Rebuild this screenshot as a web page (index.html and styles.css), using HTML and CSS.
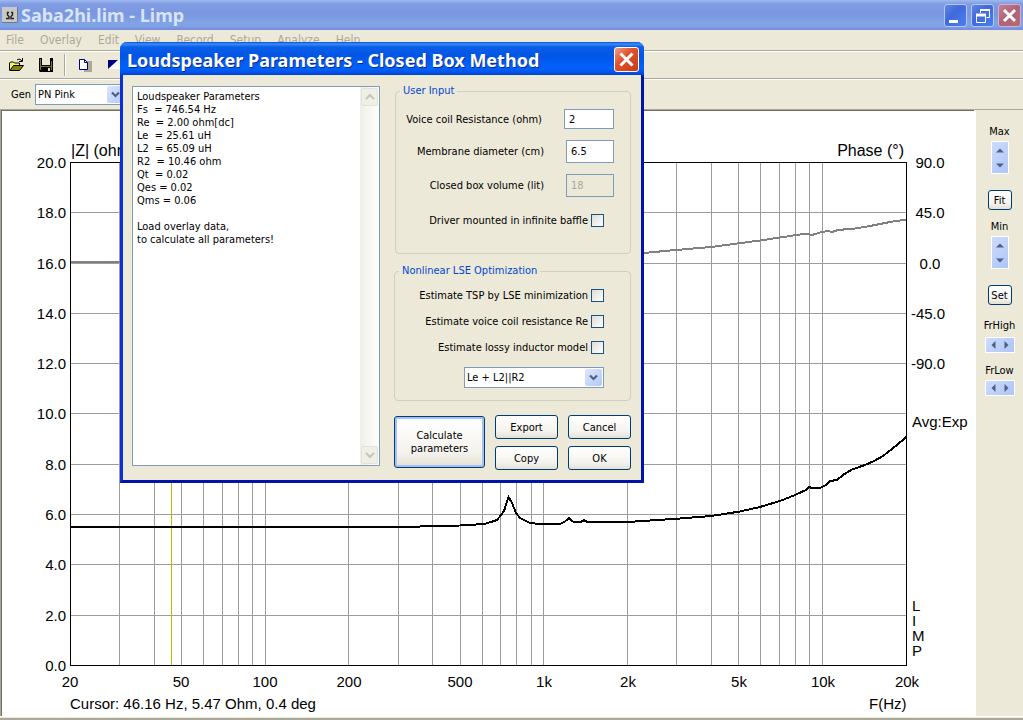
FILE: index.html
```html
<!DOCTYPE html>
<html lang="en">
<head>
<meta charset="utf-8">
<title>Saba2hi.lim - Limp</title>
<link rel="stylesheet" href="styles.css">
</head>
<body>
<div class="app">
  <header class="titlebar">
    <svg class="app-icon" width="16" height="16" viewBox="0 0 16 16"><path d="M0 0h16v16H0z" fill="#c8c8c4"/><path d="M0 15.500h15.500V0" fill="none" stroke="#707888"/><path d="M4 11.500h3V9.500L5.500 8V5.500h1.500M12 11.500H9V9.500L10.500 8V5.500H9" fill="none" stroke="#222" stroke-width="1.400"/></svg>
    <h1 class="app-title">Saba2hi.lim - Limp</h1>
    <div class="win-buttons">
      <button class="win-btn" aria-label="Minimize"><svg width="21" height="21" viewBox="0 0 21 21"><path d="M4 15h9v3H4z" fill="#fff"/></svg></button>
      <button class="win-btn" aria-label="Restore"><svg width="21" height="21" viewBox="0 0 21 21"><path d="M8.500 8V4.500h9v8h-3" fill="none" stroke="#fff"/><path d="M8 5h10" stroke="#fff" stroke-width="2"/><path d="M4.500 10v7.500h9V10" fill="none" stroke="#fff"/><path d="M4 10h10" stroke="#fff" stroke-width="3"/></svg></button>
      <button class="win-btn win-close-dim" aria-label="Close"><svg width="21" height="21" viewBox="0 0 21 21"><path d="M5 5l11 11M16 5L5 16" stroke="#fff" stroke-width="3"/></svg></button>
    </div>
  </header>
  <nav class="menubar">
    <button>File</button><button>Overlay</button><button>Edit</button><button>View</button><button>Record</button><button>Setup</button><button>Analyze</button><button>Help</button>
  </nav>
  <div class="toolbar">
    <button class="tool" aria-label="Open"><svg width="16" height="16" viewBox="0 0 16 16"><path d="M9 3q2-2 4 0l1 1M14.500 1v3.500H11" fill="none" stroke="#000"/><path d="M1.500 13.500V6l1-1h3l1 1h5v3" fill="#f4f860" stroke="#000"/><path d="M2 13.500L5.500 8.500H15.500l-4 5z" fill="#84840c" stroke="#000"/></svg></button>
    <button class="tool" aria-label="Save"><svg width="16" height="16" viewBox="0 0 16 16"><path d="M1 1h14v14H2l-1-1z" fill="#000"/><path d="M4 1h8v7H4z" fill="#ece9d8"/><path d="M2 2h1v11H2zM13 4h1v9h-1zM3 9h10v1H3z" fill="#808010"/><path d="M10 11h2v3h-2z" fill="#ddd"/></svg></button>
    <span class="tool-sep"></span>
    <button class="tool" aria-label="Copy"><svg width="16" height="16" viewBox="0 0 16 16"><path d="M7 4h8v11H7z" fill="#aaa79b"/><path d="M2.500 2.500h5l3 3v7h-8z" fill="#fff" stroke="#000080"/><path d="M7.500 2.500v3h3" fill="none" stroke="#000080"/></svg></button>
    <button class="tool" aria-label="Invert colors"><svg width="16" height="16" viewBox="0 0 16 16"><path d="M1 3h14v9H1z" fill="#fff"/><path d="M1 3h10L1 12z" fill="#000080"/></svg></button>
  </div>
  <div class="genbar">
    <label for="gen">Gen</label>
    <span class="combo combo-gen"><select id="gen"><option>PN Pink</option></select><svg class="combo-arrow" viewBox="0 0 17 17"><path d="M5 6.500l3.500 3.500L12 6.500" fill="none" stroke="#4d6185" stroke-width="2.200"/></svg></span>
  </div>
  <main class="workspace">
    <svg class="chart" viewBox="2 111 972 605" role="img" aria-label="Impedance and phase against frequency">
      <path class="grid" d="M119.500 162v503M154.500 162v503M181.500 162v503M203.500 162v503M222.500 162v503M238.500 162v503M252.500 162v503M265.500 162v503M348.500 162v503M398.500 162v503M432.500 162v503M460.500 162v503M482.500 162v503M500.500 162v503M516.500 162v503M531.500 162v503M543.500 162v503M627.500 162v503M676.500 162v503M711.500 162v503M738.500 162v503M760.500 162v503M779.500 162v503M795.500 162v503M809.500 162v503M822.500 162v503M70 212.500h837M70 263.500h837M70 313.500h837M70 363.500h837M70 413.500h837M70 464.500h837M70 514.500h837M70 564.500h837M70 615.500h837"/>
      <path class="cursor-line" d="M171.500 162v503"/>
      <path class="phase" d="M70 262H400L520 260L644 253L670 250.500L711 247L760 240.500L800 234.500L808 234L812 235L822 232L828 231L832 232L838 230L855 228.500L870 226L890 222L907 219.500"/>
      <path class="impedance" d="M70 527H400L460 525.500L484 524L491 522L497 520L501 515L504 511L508.500 497L512 503L516 513L520 518L526 521L530 523L540 524H560L565 521.500L569 518L573 521.500L581 522L584 520L587 522H627L650 520.500L680 518.500L711 516L740 511.500L760 507L780 501L795 495L806 490L809 487L812 488H820L826 485L830 481L837 480L843 475L852 469.500L865 465L875 460.500L883 456L895 446.500L907 436.500"/>
      <path class="frame" d="M70.500 162.500H906.500V665.500H70.500z"/>
      <g class="axis-title"><text x="71" y="156">|Z| (ohm)</text><text x="904" y="156" text-anchor="end">Phase (°)</text></g>
      <g class="ticks" text-anchor="end">
        <text x="66" y="168">20.0</text><text x="66" y="218">18.0</text><text x="66" y="269">16.0</text><text x="66" y="319">14.0</text><text x="66" y="369">12.0</text><text x="66" y="419">10.0</text><text x="66" y="470">8.0</text><text x="66" y="520">6.0</text><text x="66" y="570">4.0</text><text x="66" y="621">2.0</text><text x="66" y="671">0.0</text>
      </g>
      <g class="ticks" text-anchor="middle">
        <text x="930" y="168">90.0</text><text x="930" y="218">45.0</text><text x="930" y="269">0.0</text><text x="928" y="319">-45.0</text><text x="928" y="369">-90.0</text>
        <text x="70" y="687">20</text><text x="181" y="687">50</text><text x="265" y="687">100</text><text x="349" y="687">200</text><text x="460" y="687">500</text><text x="544" y="687">1k</text><text x="628" y="687">2k</text><text x="739" y="687">5k</text><text x="823" y="687">10k</text><text x="907" y="687">20k</text>
      </g>
      <g class="ticks"><text x="70" y="709">Cursor: 46.16 Hz, 5.47 Ohm, 0.4 deg</text><text x="869" y="709">F(Hz)</text><text x="912" y="427">Avg:Exp</text>
        <text x="912" y="611">L</text><text x="912" y="626">I</text><text x="912" y="641">M</text><text x="912" y="656">P</text></g>
    </svg>
    <aside class="side">
      <span>Max</span>
      <button class="spin spin-v" aria-label="Max up or down"><svg width="16" height="31" viewBox="0 0 16 31"><path d="M4 10.500h8l-4-4zM4 21.500h8l-4 4z"/></svg></button>
      <button class="btn small fit">Fit</button>
      <span>Min</span>
      <button class="spin spin-v" aria-label="Min up or down"><svg width="16" height="31" viewBox="0 0 16 31"><path d="M4 10.500h8l-4-4zM4 21.500h8l-4 4z"/></svg></button>
      <button class="btn small set">Set</button>
      <span>FrHigh</span>
      <button class="spin spin-h" aria-label="High frequency"><svg width="28" height="14" viewBox="0 0 28 14"><path d="M9.500 3v8l-4-4zM18.500 3v8l4-4z"/></svg></button>
      <span>FrLow</span>
      <button class="spin spin-h spin-low" aria-label="Low frequency"><svg width="28" height="14" viewBox="0 0 28 14"><path d="M9.500 3v8l-4-4zM18.500 3v8l4-4z"/></svg></button>
    </aside>
  </main>
  <footer class="bottom-edge"></footer>
</div>

<section class="dialog" role="dialog" aria-labelledby="dlg-title">
  <header class="dlg-title">
    <h2 id="dlg-title">Loudspeaker Parameters - Closed Box Method</h2>
    <button class="dlg-close" aria-label="Close"><svg width="23" height="23" viewBox="0 0 23 23"><path d="M5.500 5.500l12 12M17.500 5.500l-12 12" stroke="#fff" stroke-width="3"/></svg></button>
  </header>
  <div class="dlg-body">
    <div class="report">
      <textarea aria-label="Results" readonly>Loudspeaker Parameters
Fs  = 746.54 Hz
Re  = 2.00 ohm[dc]
Le  = 25.61 uH
L2  = 65.09 uH
R2  = 10.46 ohm
Qt  = 0.02
Qes = 0.02
Qms = 0.06

Load overlay data,
to calculate all parameters!</textarea>
      <div class="scrollbar">
        <button aria-label="Scroll up"><svg width="16" height="16" viewBox="0 0 16 16"><path d="M4 10l4-4 4 4" fill="none" stroke="#c6c5bc" stroke-width="2.200"/></svg></button>
        <button aria-label="Scroll down"><svg width="16" height="16" viewBox="0 0 16 16"><path d="M4 6l4 4 4-4" fill="none" stroke="#c6c5bc" stroke-width="2.200"/></svg></button>
      </div>
    </div>
    <form class="controls">
      <fieldset class="user-input">
        <legend>User Input</legend>
        <div class="row"><label for="rv">Voice coil Resistance (ohm)</label><input class="field wide" id="rv" type="text" value="2"></div>
        <div class="row"><label for="dm">Membrane diameter (cm)</label><input class="field" id="dm" type="text" value="6.5"></div>
        <div class="row"><label for="vol">Closed box volume (lit)</label><input class="field" id="vol" type="text" value="18" disabled></div>
        <div class="row check-row last"><label for="baf">Driver mounted in infinite baffle</label><input id="baf" type="checkbox"></div>
      </fieldset>
      <fieldset class="lse">
        <legend>Nonlinear LSE Optimization</legend>
        <div class="row check-row"><label for="tsp">Estimate TSP by LSE minimization</label><input id="tsp" type="checkbox"></div>
        <div class="row check-row"><label for="re">Estimate voice coil resistance Re</label><input id="re" type="checkbox"></div>
        <div class="row check-row"><label for="ind">Estimate lossy inductor model</label><input id="ind" type="checkbox"></div>
        <div class="row"><span class="combo combo-model"><select aria-label="Inductor model"><option>Le + L2||R2</option></select><svg class="combo-arrow" viewBox="0 0 17 17"><path d="M5 6.500l3.500 3.500L12 6.500" fill="none" stroke="#4d6185" stroke-width="2.200"/></svg></span></div>
      </fieldset>
      <div class="actions">
        <button type="button" class="btn primary">Calculate<br>parameters</button>
        <button type="button" class="btn">Export</button>
        <button type="button" class="btn">Cancel</button>
        <button type="button" class="btn">Copy</button>
        <button type="button" class="btn">OK</button>
      </div>
    </form>
  </div>
</section>
</body>
</html>
```
FILE: styles.css
```css
* { box-sizing: border-box; }
html, body { height: 100%; }
body {
  margin: 0;
  background: #ece9d8;
  color: #000;
  font: 11px/13px "DejaVu Sans Condensed", "DejaVu Sans", sans-serif;
}
button, input, select, textarea { font: inherit; color: inherit; margin: 0; }
button { padding: 0; border: 0; background: none; }
svg { display: block; }
h1, h2 { margin: 0; font: bold 18px/24px "Noto Sans", sans-serif; white-space: nowrap; }

.app { display: flex; flex-direction: column; min-height: 100vh; }

.titlebar {
  display: flex;
  align-items: center;
  height: 30px;
  padding: 0 2px;
  background: linear-gradient(#9db9f0 0, #7f9ce3 4px, #7a96df 14px, #82a5e6 24px, #7e9ee4 27px, #7489dc 30px);
}
.app-icon { margin-right: 3px; }
.app-title { flex: 1; color: #d8e4f8; }
.win-buttons { display: flex; gap: 4px; }
.win-btn {
  width: 23px;
  height: 23px;
  border: 1px solid #b4c8f4;
  border-radius: 3px;
  background: linear-gradient(135deg, #5f88e8, #4069dc 40%, #4c80ee);
}
.win-close-dim { background: linear-gradient(135deg, #bf7f92, #b0627a 50%, #b86a72); border-color: #d0b0cc; }

.menubar {
  display: flex;
  align-items: center;
  gap: 16px;
  height: 21px;
  padding: 0 6px;
  border-bottom: 1px solid #aca899;
  font-size: 12px;
}
.menubar button { color: #aca899; }

.toolbar {
  display: flex;
  align-items: center;
  height: 28px;
  padding: 0 8px;
  border-top: 1px solid #fff;
  border-bottom: 1px solid #aca899;
}
.tool { margin-right: 14px; }
.tool-sep { width: 2px; height: 22px; margin: 0 11px 0 -4px; border-left: 1px solid #aca899; border-right: 1px solid #fff; }

.genbar {
  display: flex;
  align-items: center;
  gap: 4px;
  height: 31px;
  padding-left: 11px;
  border-top: 1px solid #fff;
  border-bottom: 1px solid #aca899;
}

.combo { display: flex; align-items: center; background: #fff; border: 1px solid #7f9db9; padding-right: 1px; }
.combo select { flex: 1; min-width: 0; height: 19px; padding: 0 2px; border: 0; background: #fff; appearance: none; }
.combo-arrow { width: 17px; height: 17px; border-radius: 2px; background: linear-gradient(135deg, #dbe5fd, #b4c8f7); }
.combo-gen { width: 91px; }
.combo-model { width: 140px; }

.workspace { display: flex; flex: 1; align-items: stretch; border-left: 1px solid #aca899; min-height: 0; }
.chart {
  flex: 1;
  min-width: 0;
  background: #fff;
  border-left: 1px solid #716f64;
  border-top: 1px solid #716f64;
}
.chart path { shape-rendering: crispEdges; }
.grid { stroke: #9c9c9c; fill: none; }
.cursor-line { stroke: #bcbc00; }
.phase { stroke: #808080; stroke-width: 2; fill: none; }
.impedance { stroke: #000; stroke-width: 2; fill: none; }
.frame { stroke: #000; fill: none; }
.axis-title { font: 16px "Liberation Sans", Arial, sans-serif; }
.ticks { font: 15px "Liberation Sans", Arial, sans-serif; }

.side {
  display: flex;
  flex-direction: column;
  align-items: center;
  width: 49px;
  padding-top: 15px;
  border-left: 2px solid #fff;
}
.spin { border: 1px solid #fff; background: linear-gradient(135deg, #cddbfd, #afc5f8); }
.spin svg { fill: #4d6185; }
.spin-v { margin: 3px 0 16px; }
.spin-h { margin: 5px 0 11px; }
.spin-low { margin-top: 3px; }

.bottom-edge { height: 4px; border-top: 1px solid #fff; border-bottom: 2px solid #aca899; }

.btn {
  min-height: 24px;
  border: 1px solid #003c74;
  border-radius: 3px;
  background: linear-gradient(#fff, #f4f3ee 70%, #e4e0d4);
}
.small { width: 24px; min-height: 20px; }
.fit { margin-bottom: 10px; }
.set { margin-bottom: 14px; }

.dialog {
  position: absolute;
  left: 120px;
  top: 42px;
  width: 524px;
  border: solid #0831d9;
  border-width: 0 3px 3px;
  border-right-color: #0014a8;
  border-bottom-color: #0014a8;
  border-radius: 7px 7px 0 0;
  background: #ece9d8;
}
.dlg-title {
  display: flex;
  align-items: center;
  justify-content: space-between;
  height: 33px;
  margin: 0 -3px;
  padding: 2px 5px 0 7px;
  border-radius: 7px 7px 0 0;
  background: linear-gradient(#0a4fd8 0, #3b8cff 2px, #0a5ee8 5px, #0055e5 14px, #0262fb 26px, #0355ec 30px, #0040c8 33px);
}
.dlg-title h2 { color: #fff; text-shadow: 1px 1px 0 #0a2a90; }
.dlg-close {
  width: 25px;
  height: 25px;
  border: 1px solid #fff;
  border-radius: 3px;
  background: linear-gradient(135deg, #f0a088, #e0532c 40%, #c83a14);
}
.dlg-body { display: flex; align-items: stretch; gap: 14px; padding: 11px 10px 10px 9px; }

.report { display: flex; flex: 1; height: 380px; border: 1px solid #7f9db9; background: #fff; }
.report textarea { flex: 1; min-width: 0; padding: 3px 4px; border: 0; resize: none; background: #fff; overflow: hidden; outline: 0; }
.scrollbar { display: flex; flex-direction: column; justify-content: space-between; width: 19px; padding: 1px; background: linear-gradient(90deg, #f0f0ea, #fefefb); }
.scrollbar button { border: 1px solid #e4e2d6; border-radius: 2px; background: #f0efe6; width: 17px; height: 18px; }

.controls { width: 237px; margin-top: -2px; }
fieldset { margin: 0; padding: 11px 26px 0 0; border: 1px solid #d0d0bf; border-radius: 4px; min-width: 0; }
legend { margin-left: 4px; padding: 0 3px; color: #0046d5; line-height: 14px; }
.user-input { height: 170px; margin-left: 1px; padding-right: 16px; }
.lse { height: 137px; margin-top: 10px; }
.row { display: flex; align-items: center; justify-content: flex-end; gap: 22px; margin-bottom: 11px; }
.field { width: 48px; height: 23px; padding: 0 4px; border: 1px solid #7f9db9; background: #fff; }
.field.wide { width: 50px; height: 20px; }
.field:disabled { background: #ece9d8; color: #aca899; }
.check-row { gap: 3px; height: 13px; margin-bottom: 13px; }
.last { margin-top: 17px; padding-right: 10px; }
input[type="checkbox"] {
  appearance: none;
  width: 13px;
  height: 13px;
  border: 1px solid #1c5180;
  background: linear-gradient(135deg, #dcdcd7, #fff);
}
.actions { display: grid; grid-template-columns: 91px 63px 63px; column-gap: 10px; row-gap: 7px; margin-top: 14px; }
.primary { grid-row: span 2; margin: 1px 0 2px; box-shadow: inset 0 0 0 2px #a4c0f4; }
```
